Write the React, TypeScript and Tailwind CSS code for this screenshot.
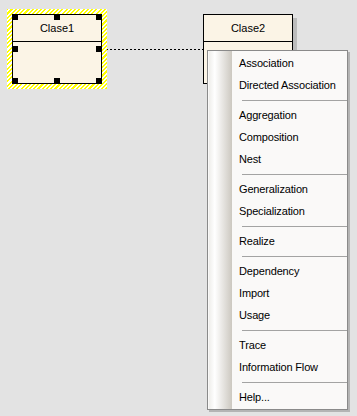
import React from "react";

const font = { fontFamily: '"Liberation Sans", Arial, sans-serif' };

type Entry = string | null;
const entries: Entry[] = [
  "Association",
  "Directed Association",
  null,
  "Aggregation",
  "Composition",
  "Nest",
  null,
  "Generalization",
  "Specialization",
  null,
  "Realize",
  null,
  "Dependency",
  "Import",
  "Usage",
  null,
  "Trace",
  "Information Flow",
  null,
  "Help...",
];

function Handle() {
  return <div className="w-[6px] h-[6px] bg-black" />;
}

function ClassBox({ name }: { name: string }) {
  return (
    <div className="w-full h-full border border-black bg-[#fbf4e6] flex flex-col">
      <div className="h-[27px] flex items-center justify-center text-[11px] text-black border-b border-black" style={font}>
        {name}
      </div>
      <div className="flex-1" />
    </div>
  );
}

export default function App() {
  return (
    <div className="relative w-[357px] h-[416px] bg-[#e3e3e3] overflow-hidden" style={font}>
      {/* association dashed line */}
      <div className="absolute left-[102px] top-[49px] w-[101px] h-px bg-[repeating-linear-gradient(90deg,#000_0_2px,transparent_2px_4px)]" />

      {/* Clase1 selected */}
      <div className="absolute left-[7px] top-[9px] w-[100px] h-[80px] p-[5px] bg-[repeating-linear-gradient(-45deg,#ffff00_0_1.5px,#ffffff_1.5px_3px)]">
        <div className="relative w-[90px] h-[70px]">
          <ClassBox name="Clase1" />
          {/* selection handles overlay */}
          <div className="absolute inset-0 flex flex-col justify-between">
            <div className="flex justify-between">
              <Handle />
              <Handle />
              <Handle />
            </div>
            <div className="flex justify-between">
              <Handle />
              <Handle />
            </div>
            <div className="flex justify-between">
              <Handle />
              <Handle />
              <Handle />
            </div>
          </div>
        </div>
      </div>

      {/* Clase2 */}
      <div className="absolute left-[203px] top-[14px] w-[90px] h-[70px] shadow-[4px_4px_0_#bcbcbc]">
        <ClassBox name="Clase2" />
      </div>

      {/* Context menu */}
      <div className="absolute left-[207px] top-[50px] w-[141px] border border-[#8a8a8a] bg-[#faf9f8] shadow-[2px_2px_0_#b4b4b4] flex">
        <div className="w-[23px] ml-px bg-[linear-gradient(90deg,#efeeeb,#ffffff_25%,#ccc8c0)]" />
        <div className="flex-1 flex flex-col py-px">
          {entries.map((e, i) =>
            e === null ? (
              <div key={i} className="h-[8px] flex items-center pl-[10px]">
                <div className="h-px w-full bg-[#a3a3a3]" />
              </div>
            ) : (
              <div key={i} className="h-[22px] flex items-center pl-[7px] text-[11px] tracking-[-0.15px] text-black whitespace-nowrap">
                {e}
              </div>
            )
          )}
        </div>
      </div>
    </div>
  );
}
